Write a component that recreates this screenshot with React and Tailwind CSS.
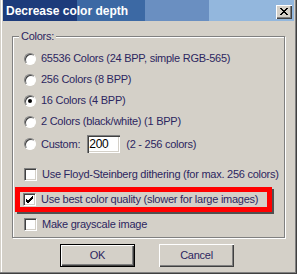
import React from "react";

const font = { fontFamily: '"Liberation Sans", Arial, sans-serif' };

function Radio({ checked }) {
  return (
    <span className="relative flex h-[12px] w-[12px] shrink-0 items-center justify-center rounded-full border border-t-[#808080] border-l-[#808080] border-r-white border-b-white bg-white shadow-[inset_1px_1px_0_#404040]">
      {checked && <span className="h-[4px] w-[4px] rounded-full bg-black" />}
    </span>
  );
}

function Check({ checked }) {
  return (
    <span className="flex h-[13px] w-[13px] shrink-0 items-center justify-center border border-t-[#808080] border-l-[#808080] border-r-white border-b-white bg-white shadow-[inset_1px_1px_0_#404040,inset_-1px_-1px_0_#d4d0c8]">
      {checked && (
        <svg width="9" height="9" viewBox="0 0 9 9">
          <path d="M1 4 L3 6 L8 1 M1 5 L3 7 L8 2 M1 6 L3 8 L8 3" stroke="#000" strokeWidth="1" fill="none" />
        </svg>
      )}
    </span>
  );
}

function RadioRow({ label, checked }) {
  return (
    <div className="flex h-[21px] items-center gap-[5px]">
      <Radio checked={checked} />
      <span>{label}</span>
    </div>
  );
}

function Button({ children, isDefault }) {
  return (
    <div
      className={`flex h-[23px] w-[75px] items-center justify-center bg-[#d4d0c8] ${
        isDefault
          ? "border border-black shadow-[inset_1px_1px_0_#fff,inset_-1px_-1px_0_#404040,inset_-2px_-2px_0_#808080]"
          : "shadow-[inset_1px_1px_0_#fff,inset_-1px_-1px_0_#404040,inset_-2px_-2px_0_#808080]"
      }`}
    >
      {children}
    </div>
  );
}

export default function App() {
  return (
    <div
      className="flex h-[274px] w-[297px] flex-col bg-[#d4d0c8] px-[3px] pb-[3px] text-[11px] tracking-[-0.25px] text-[#2c2660] shadow-[inset_-1px_-1px_0_#404040,inset_-2px_-2px_0_#808080,inset_1px_0_0_#d4d0c8,inset_2px_0_0_#fff]"
      style={font}
    >
      {/* title bar */}
      <div className="flex h-[21px] shrink-0 items-center justify-between bg-[linear-gradient(to_right,#1d3b7b_0_74px,#3c69a4_74px_142px,#6a8fc1_142px_206px,#93b7dd_206px)] pl-[3px] pr-[2px]">
        <span className="text-[12px] font-bold tracking-normal text-white">Decrease color depth</span>
        <div className="mt-[2px] flex h-[14px] w-[16px] items-center justify-center bg-[#d4d0c8] shadow-[inset_1px_1px_0_#fff,inset_-1px_-1px_0_#404040,inset_-2px_-2px_0_#808080]">
          <svg width="8" height="7" viewBox="0 0 8 7" shapeRendering="crispEdges">
            <path
              d="M0 0h2v1H0z M6 0h2v1H6z M1 1h2v1H1z M5 1h2v1H5z M2 2h4v1H2z M3 3h2v1H3z M2 4h4v1H2z M1 5h2v1H1z M5 5h2v1H5z M0 6h2v1H0z M6 6h2v1H6z"
              fill="#000"
            />
          </svg>
        </div>
      </div>

      {/* group box */}
      <div className="relative mx-[9px] mt-[15px] h-[202px] border border-[#808080] pl-[11px] pt-[11px] shadow-[inset_1px_1px_0_#fff,1px_1px_0_#fff]">
        <span className="absolute left-[6px] top-[-7px] bg-[#d4d0c8] px-[2px] leading-[13px]">Colors:</span>
        <RadioRow label="65536 Colors (24 BPP, simple RGB-565)" />
        <RadioRow label="256 Colors (8 BPP)" />
        <RadioRow label="16 Colors (4 BPP)" checked />
        <RadioRow label="2 Colors (black/white) (1 BPP)" />
        <div className="flex h-[24px] items-center gap-[5px]">
          <Radio />
          <span>Custom:</span>
          <div className="ml-[2px] flex h-[18px] w-[33px] items-center bg-white pl-[2px] text-[12px] text-black shadow-[inset_1px_1px_0_#808080,inset_2px_2px_0_#404040,inset_-1px_-1px_0_#fff,inset_-2px_-2px_0_#d4d0c8]">
            200
          </div>
          <span className="ml-[1px]">(2 - 256 colors)</span>
        </div>

        <div className="mt-[6px] flex h-[25px] items-center gap-[5px]">
          <Check />
          <span>Use Floyd-Steinberg dithering (for max. 256 colors)</span>
        </div>
        <div className="-ml-[9px] mr-[12px] flex h-[25px] items-center gap-[5px] border-[5px] border-[#ff0000] pl-[3px] shadow-[2px_2px_0_#505050]">
          <Check checked />
          <span>Use best color quality (slower for large images)</span>
        </div>
        <div className="flex h-[25px] items-center gap-[5px]">
          <Check />
          <span>Make grayscale image</span>
        </div>
      </div>

      {/* buttons */}
      <div className="mt-[6px] flex gap-[24px] pl-[57px]">
        <Button isDefault>OK</Button>
        <Button>Cancel</Button>
      </div>
    </div>
  );
}
